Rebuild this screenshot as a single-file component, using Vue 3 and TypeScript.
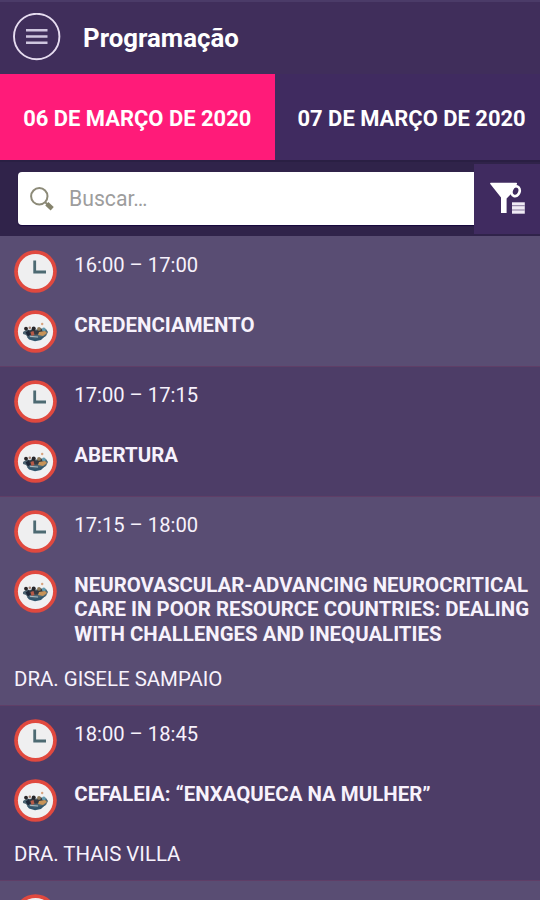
<script setup lang="ts">
import { ref } from 'vue'

interface Session {
  time: string
  title?: string
  speaker?: string
}

const days: string[] = ['06 DE MARÇO DE 2020', '07 DE MARÇO DE 2020']
const activeDay = ref(0)
const query = ref('')

const sessions: Session[] = [
  { time: '16:00 – 17:00', title: 'CREDENCIAMENTO' },
  { time: '17:00 – 17:15', title: 'ABERTURA' },
  {
    time: '17:15 – 18:00',
    title: 'NEUROVASCULAR-ADVANCING NEUROCRITICAL CARE IN POOR RESOURCE COUNTRIES: DEALING WITH CHALLENGES AND INEQUALITIES',
    speaker: 'DRA. GISELE SAMPAIO',
  },
  { time: '18:00 – 18:45', title: 'CEFALEIA: “ENXAQUECA NA MULHER”', speaker: 'DRA. THAIS VILLA' },
  { time: '' },
]
</script>

<template>
  <div class="screen">
    <header class="topbar">
      <button class="menu" aria-label="Menu">
        <svg width="48" height="48" viewBox="0 0 48 48">
          <circle cx="23.700" cy="23.500" r="22.700" fill="none" stroke="#e6dcf0" stroke-width="1.900" />
          <path d="M13 17.300h21.500M13 23.500h21.500M13 29.700h21.500" stroke="#cfc6df" stroke-width="2.600" />
        </svg>
      </button>
      <h1>Programação</h1>
    </header>

    <nav class="tabs">
      <button
        v-for="(day, i) in days"
        :key="day"
        class="tab"
        :class="{ active: activeDay === i }"
        @click="activeDay = i"
      >
        {{ day }}
      </button>
    </nav>

    <div class="searchbar">
      <label class="search">
        <svg class="lens" width="26" height="26" viewBox="0 0 26 26" fill="none">
          <circle cx="9.300" cy="10.300" r="8.200" stroke="#8c8a78" stroke-width="2" />
          <path d="M15 16l2.500 2.500" stroke="#8c8a78" stroke-width="1.800" />
          <path d="M16.800 17.800l5.400 4.900" stroke="#85836c" stroke-width="4.600" />
        </svg>
        <input v-model="query" type="text" placeholder="Buscar…" />
      </label>
      <button class="filter" aria-label="Filtrar">
        <svg width="36" height="34" viewBox="0 0 36 34">
          <ellipse cx="25.600" cy="9.200" rx="4" ry="5" fill="none" stroke="#fff" stroke-width="2.700" transform="rotate(20 25.600 9.200)" />
          <path d="M.8.8h25.400c.9 0 1.100.8.6 1.600L22.500 7.500 21 12l-4.400 4.500V31h-5.600V15.500L.3 2C-.1 1.400.1.8.8.8z" fill="#fff" />
          <path d="M22 20.300h12.800v11.400H22z" fill="#efeaf4" />
          <path d="M22 23.700h12.800M22 28h12.800" stroke="#85769b" stroke-width="1" />
        </svg>
      </button>
    </div>

    <main class="list">
      <article v-for="(s, i) in sessions" :key="i" class="session">
        <div class="line">
          <svg class="icon" viewBox="0 0 43 43">
            <circle cx="21.500" cy="21.500" r="21.300" fill="#e0493f" />
            <circle cx="21.500" cy="21.500" r="17.600" fill="#efeff0" />
            <path d="M20.700 10.500V22h11.300" fill="none" stroke="#4d6a72" stroke-width="2.800" />
          </svg>
          <p class="time">{{ s.time }}</p>
        </div>
        <div v-if="s.title" class="line">
          <svg class="icon" viewBox="0 0 43 43">
            <circle cx="21.500" cy="21.500" r="21.300" fill="#e0493f" />
            <circle cx="21.500" cy="21.500" r="17.600" fill="#f0f1f2" />
            <path d="M9 22l3-2 20-1 2 3-2 4-5 3-7 1-6-2-2-3-3-1z" fill="#4d6674" />
            <path d="M13 19l3 2 3-3 3 3 4-3 5 2-1 4-14 1z" fill="#343840" />
            <circle cx="12" cy="18.600" r="1.900" fill="#282527" />
            <circle cx="15.800" cy="17.800" r="1.300" fill="#a88574" />
            <circle cx="19.700" cy="18.600" r="2" fill="#242529" />
            <circle cx="25" cy="18.900" r="1.900" fill="#8d7956" />
            <circle cx="29.800" cy="19.500" r="1.900" fill="#639baf" />
            <path d="M11.500 22.500l3-2 2 4-2.500 2z" fill="#1d2738" />
            <path d="M16.500 22l3-1 1 4-3 1z" fill="#b75b48" />
            <path d="M25 22l6-1 2 2-4 3-5-1z" fill="#c89459" />
            <path d="M13 27l8 1.500 10-2.500-4 4-6 1.300-6-1.700z" fill="#31566d" />
            <path d="M16 26.300l8 .7" stroke="#a9bcc3" stroke-width="1" />
            <circle cx="28.200" cy="14" r="1.200" fill="#d6a17d" />
          </svg>
          <h2 class="title">{{ s.title }}</h2>
        </div>
        <p v-if="s.speaker" class="speaker">{{ s.speaker }}</p>
      </article>
    </main>
  </div>
</template>

<style>
body {
  margin: 0;
  overflow: hidden;
}
</style>

<style scoped>
.screen {
  box-sizing: border-box;
  height: 900px;
  overflow: hidden;
  background: #402e5b;
  color: #f7f2fc;
  font-family: Roboto, sans-serif;
  border-top: 2px solid #4b3b68;
}
button {
  border: 0;
  padding: 0;
  background: none;
  color: inherit;
  font: inherit;
}
svg {
  display: block;
  flex: none;
}
h1,
h2,
p {
  margin: 0;
}
.topbar {
  display: flex;
  align-items: center;
  box-sizing: border-box;
  height: 72px;
  padding: 0 12px 3px 13px;
  gap: 22px;
}
h1 {
  color: #fff;
  font-size: 25.800px;
  line-height: 30px;
  font-weight: 700;
  padding-top: 2px;
}
.tabs {
  display: flex;
  height: 86px;
}
.tab {
  flex: none;
  width: 274.500px;
  padding-top: 3px;
  background: #402b60;
  color: #fff;
  font-size: 21.950px;
  font-weight: 700;
  white-space: nowrap;
}
.tab.active {
  background: #ff1b79;
}
.tab:last-child {
  flex: 1;
  padding-left: 23px;
  text-align: left;
}
.searchbar {
  display: flex;
  box-sizing: border-box;
  height: 76px;
  padding-left: 18px;
  background: #30234a;
  border-top: 2px solid #2a1f43;
}
.search {
  display: flex;
  align-items: center;
  box-sizing: border-box;
  width: 456px;
  height: 53px;
  margin-top: 10px;
  padding-left: 12px;
  background: #fff;
  border-radius: 4px 0 0 4px;
  box-shadow: 0 1px 1px #17083d;
}
input {
  width: 360px;
  margin: 0 0 0 13px;
  padding: 0;
  border: 0;
  outline: 0;
  background: none;
  color: #555;
  font: 21.200px/30px Roboto, sans-serif;
}
input::placeholder {
  color: #9d9d9d;
  opacity: 1;
}
.filter {
  display: flex;
  flex: 1;
  margin: 2px 0;
  padding: 18px 0 0 16px;
  background: #402b60;
}
.session {
  box-sizing: border-box;
  padding: 13.500px 8px 13.500px 14px;
  background: #4d3d67;
}
.session:nth-child(odd) {
  background: #594d73;
}
.session + .session {
  box-shadow: inset 0 1px #5f3e67;
}
.line {
  display: flex;
  gap: 17.300px;
}
.line + .line {
  margin-top: 17.100px;
}
.icon {
  width: 43px;
  height: 43px;
}
.time,
.title,
.speaker {
  font-size: 20.430px;
  line-height: 24.600px;
}
.time {
  font-size: 20.200px;
}
.time,
.title {
  padding-top: 3px;
}
.title {
  font-weight: 700;
}
.speaker {
  margin-top: 20.400px;
}
</style>
